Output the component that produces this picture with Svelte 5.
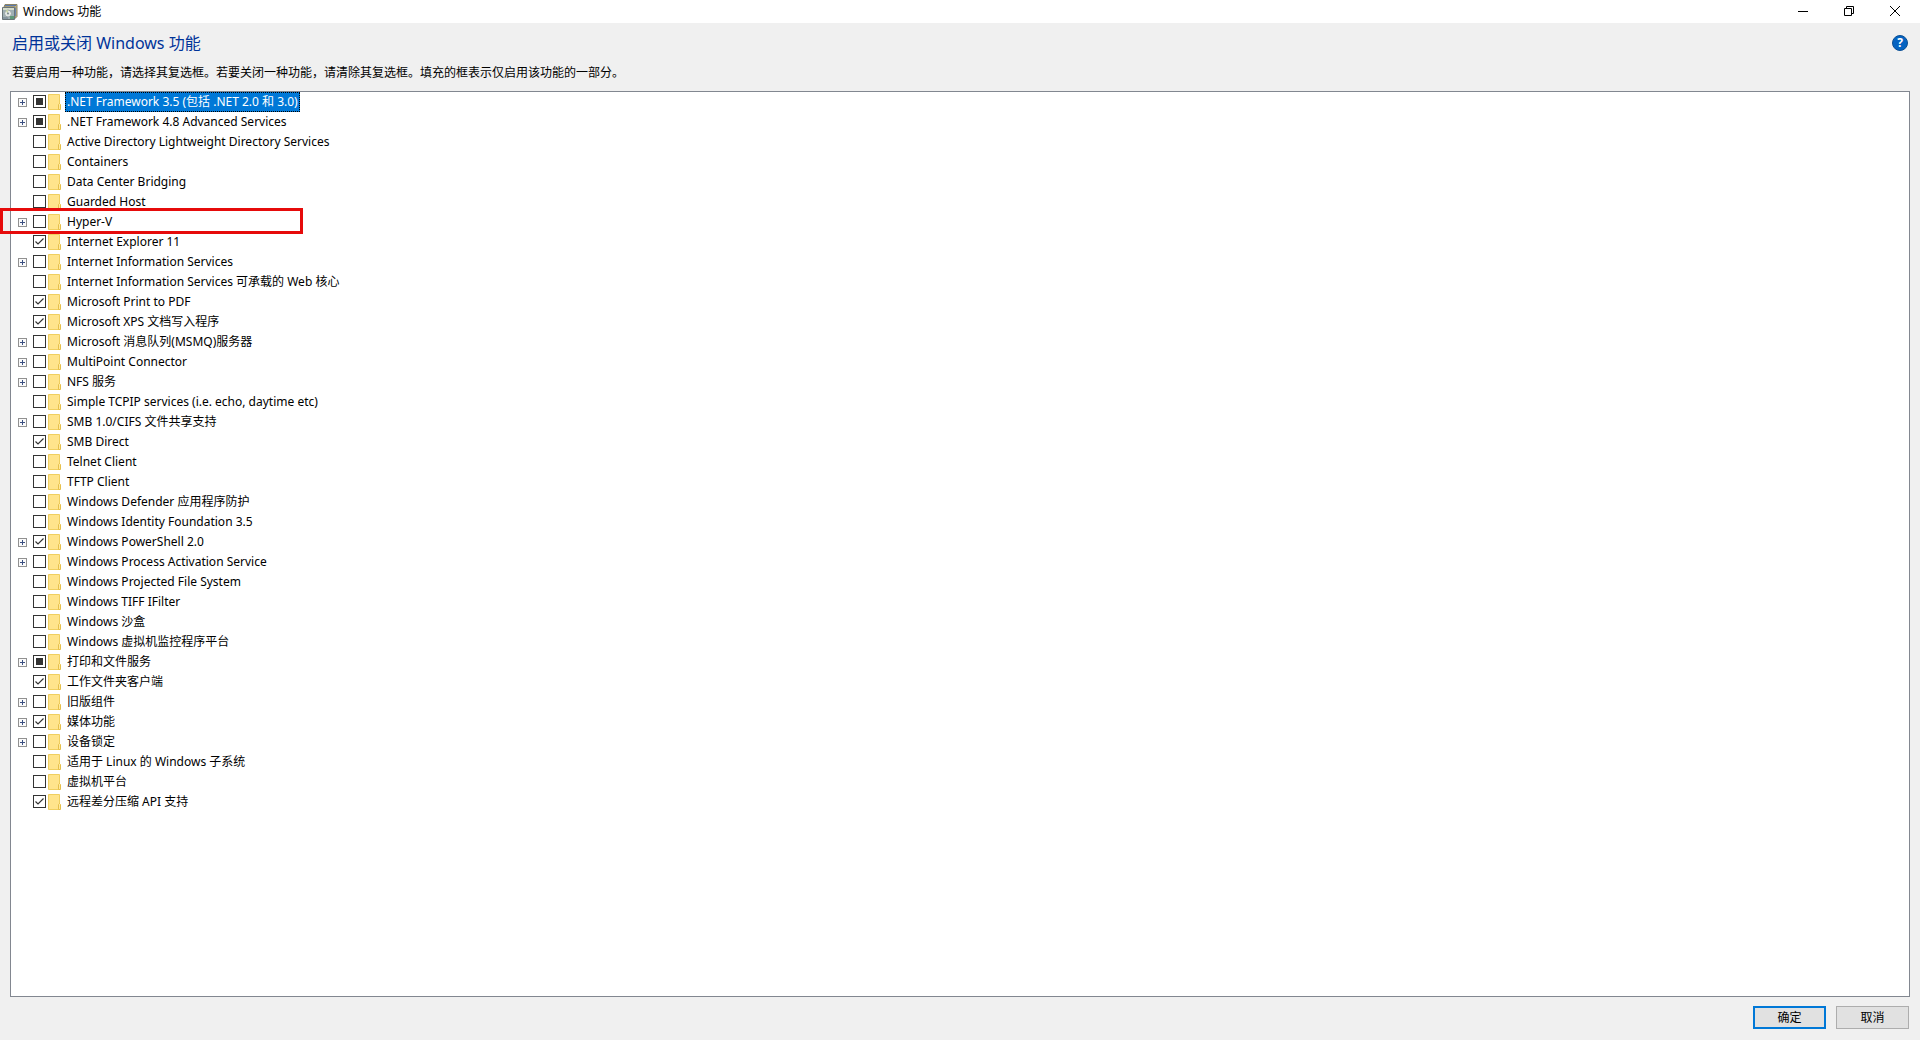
<script>
  let features = [
    { name: '.NET Framework 3.5 (包括 .NET 2.0 和 3.0)', state: 'partial', expandable: true },
    { name: '.NET Framework 4.8 Advanced Services', state: 'partial', expandable: true },
    { name: 'Active Directory Lightweight Directory Services' },
    { name: 'Containers' },
    { name: 'Data Center Bridging' },
    { name: 'Guarded Host' },
    { name: 'Hyper-V', expandable: true, marked: true },
    { name: 'Internet Explorer 11', state: 'on' },
    { name: 'Internet Information Services', expandable: true },
    { name: 'Internet Information Services 可承载的 Web 核心' },
    { name: 'Microsoft Print to PDF', state: 'on' },
    { name: 'Microsoft XPS 文档写入程序', state: 'on' },
    { name: 'Microsoft 消息队列(MSMQ)服务器', expandable: true },
    { name: 'MultiPoint Connector', expandable: true },
    { name: 'NFS 服务', expandable: true },
    { name: 'Simple TCPIP services (i.e. echo, daytime etc)' },
    { name: 'SMB 1.0/CIFS 文件共享支持', expandable: true },
    { name: 'SMB Direct', state: 'on' },
    { name: 'Telnet Client' },
    { name: 'TFTP Client' },
    { name: 'Windows Defender 应用程序防护' },
    { name: 'Windows Identity Foundation 3.5' },
    { name: 'Windows PowerShell 2.0', state: 'on', expandable: true },
    { name: 'Windows Process Activation Service', expandable: true },
    { name: 'Windows Projected File System' },
    { name: 'Windows TIFF IFilter' },
    { name: 'Windows 沙盒' },
    { name: 'Windows 虚拟机监控程序平台' },
    { name: '打印和文件服务', state: 'partial', expandable: true },
    { name: '工作文件夹客户端', state: 'on' },
    { name: '旧版组件', expandable: true },
    { name: '媒体功能', state: 'on', expandable: true },
    { name: '设备锁定', expandable: true },
    { name: '适用于 Linux 的 Windows 子系统' },
    { name: '虚拟机平台' },
    { name: '远程差分压缩 API 支持', state: 'on' }
  ];

  let selected = 0;
</script>

<div class="window" lang="zh-CN">
  <header class="titlebar">
    <svg class="app-icon" width="16" height="16" viewBox="0 0 16 16" aria-hidden="true">
      <path d="M3 .5h12v12l-2 2V3H2z" fill="#c2b280" stroke="#8b8466" />
      <path d="M3 1.500h11" stroke="#5b79ad" />
      <path d="M.5 3.500h12v12H.5z" fill="#9fb0b4" stroke="#6a7578" />
      <path d="M1 4h11v2H1z" fill="#d5dccb" />
      <path d="M1 13h5v2H1z" fill="#8796a0" />
      <circle cx="6" cy="9.500" r="3.500" fill="#e3e8e6" stroke="#9aa5a6" />
      <path d="M6 9.500 3.500 7A3.500 3.500 0 0 1 6 6z" fill="#c9d6a8" />
      <circle cx="6" cy="9.500" r="1" fill="#76858c" />
      <path d="M8 12h4v3H8z" fill="#5f9a78" />
      <path d="M13.500 4v8" stroke="#6c86ad" />
    </svg>
    <span class="title">Windows 功能</span>
    <div class="controls">
      <button type="button" aria-label="最小化">
        <svg width="10" height="10" viewBox="0 0 10 10"><path d="M0 5.5h10" /></svg>
      </button>
      <button type="button" aria-label="还原">
        <svg width="10" height="10" viewBox="0 0 10 10"><path d="M.5 2.500h7v7h-7zM2.500 2.500v-2h7v7h-2" /></svg>
      </button>
      <button type="button" aria-label="关闭">
        <svg width="10" height="10" viewBox="0 0 10 10"><path d="m0 0 10 10M10 0 0 10" /></svg>
      </button>
    </div>
  </header>

  <main>
    <div class="heading">
      <h1>启用或关闭 Windows 功能</h1>
      <button class="help" type="button" aria-label="帮助">?</button>
    </div>
    <p>若要启用一种功能，请选择其复选框。若要关闭一种功能，请清除其复选框。填充的框表示仅启用该功能的一部分。</p>

    <ul class="tree">
      {#each features as feature, i}
        <li class:marked={feature.marked}>
          {#if feature.expandable}
            <button class="expander" type="button" aria-label="展开">
              <svg width="9" height="9" viewBox="0 0 9 9">
                <rect x=".5" y=".5" width="8" height="8" fill="#fafafa" stroke="#919191" />
                <path d="M2 4.5h5M4.5 2v5" stroke="#3b4f81" />
              </svg>
            </button>
          {:else}
            <span class="expander"></span>
          {/if}
          <input
            id="feature-{i}"
            type="checkbox"
            checked={feature.state === 'on'}
            indeterminate={feature.state === 'partial'}
          />
          <svg class="folder" width="13" height="16" viewBox="0 0 13 16" aria-hidden="true">
            <path d="M.5.5h11v15H.5z" fill="#ffe48c" stroke="#f0cf60" />
            <path d="M10.500 15.500v-5l1-1 1 1v5z" fill="#ffe99c" stroke="#e6c04c" />
          </svg>
          <label for="feature-{i}" class:selected={i === selected}>{feature.name}</label>
        </li>
      {/each}
    </ul>

    <footer>
      <button class="primary" type="button">确定</button>
      <button type="button">取消</button>
    </footer>
  </main>
</div>

<style>
  :global(body) {
    margin: 0;
  }

  .window {
    display: flex;
    flex-direction: column;
    min-height: 100vh;
    background: #f0f0f0;
    color: #000;
    font-family: "Noto Sans", "Noto Sans CJK SC", sans-serif;
    font-size: 12px;
    line-height: 20px;
  }

  button {
    font: inherit;
    color: inherit;
    padding: 0;
    box-sizing: border-box;
  }

  .titlebar {
    display: flex;
    align-items: center;
    height: 23px;
    padding-left: 2px;
    background: #fff;
  }

  .title {
    margin-left: 5px;
    flex: 1;
  }

  .controls {
    display: flex;
    padding-right: 2px;
  }

  .controls button {
    display: flex;
    align-items: center;
    justify-content: center;
    width: 46px;
    height: 22px;
    padding-bottom: 2px;
    border: none;
    background: none;
  }

  .controls path {
    fill: none;
    stroke: #000;
  }

  main {
    flex: 1;
    display: flex;
    flex-direction: column;
    padding: 8px 10px 11px;
  }

  .heading {
    display: flex;
    align-items: center;
    justify-content: space-between;
    padding: 0 2px;
  }

  h1 {
    margin: 0;
    color: #003399;
    font-size: 16px;
    font-weight: 400;
    line-height: 24px;
  }

  .help {
    width: 16px;
    height: 16px;
    border: 1px solid #0b4f94;
    border-radius: 50%;
    background: #0563c1;
    color: #fff;
    font-weight: 700;
    line-height: 14px;
  }

  p {
    margin: 8px 2px;
  }

  .tree {
    flex: 1;
    margin: 0;
    padding: 0;
    list-style: none;
    background: #fff;
    border: 1px solid #828790;
  }

  li {
    display: flex;
    align-items: center;
    height: 20px;
    padding-left: 7px;
  }

  .expander {
    display: flex;
    width: 9px;
    height: 9px;
    margin-right: 6px;
    border: none;
    background: none;
  }

  input {
    appearance: none;
    box-sizing: border-box;
    width: 13px;
    height: 13px;
    margin: 0 2px 1px 0;
    border: 1px solid #333;
    background: #fff;
  }

  input:checked {
    background: url("data:image/svg+xml,%3Csvg xmlns='http://www.w3.org/2000/svg' viewBox='0 0 11 11'%3E%3Cpath d='M1.5 5.5 4 8l5.500-5.500' fill='none' stroke='%23333' stroke-width='1.2'/%3E%3C/svg%3E");
  }

  input:indeterminate {
    background: #333;
    border-color: #333;
    box-shadow: inset 0 0 0 2px #fff;
  }

  label {
    margin-left: 4px;
    padding: 0 2px;
  }

  .selected {
    background: #0078d7;
    color: #fff;
    outline: 1px dotted #000;
    outline-offset: -1px;
  }

  /* red frame drawn over the row, out to the window edge */
  .marked {
    position: relative;
  }

  .marked::after {
    content: "";
    position: absolute;
    top: -4px;
    left: -11px;
    width: 303px;
    height: 26px;
    box-sizing: border-box;
    border: 3px solid #e60b0b;
    pointer-events: none;
  }

  footer {
    display: flex;
    justify-content: flex-end;
    gap: 10px;
    margin-top: 9px;
    padding-right: 1px;
  }

  footer button {
    width: 73px;
    height: 23px;
    border: 1px solid #adadad;
    background: #e1e1e1;
  }

  footer .primary {
    border: 2px solid #0078d7;
  }
</style>
